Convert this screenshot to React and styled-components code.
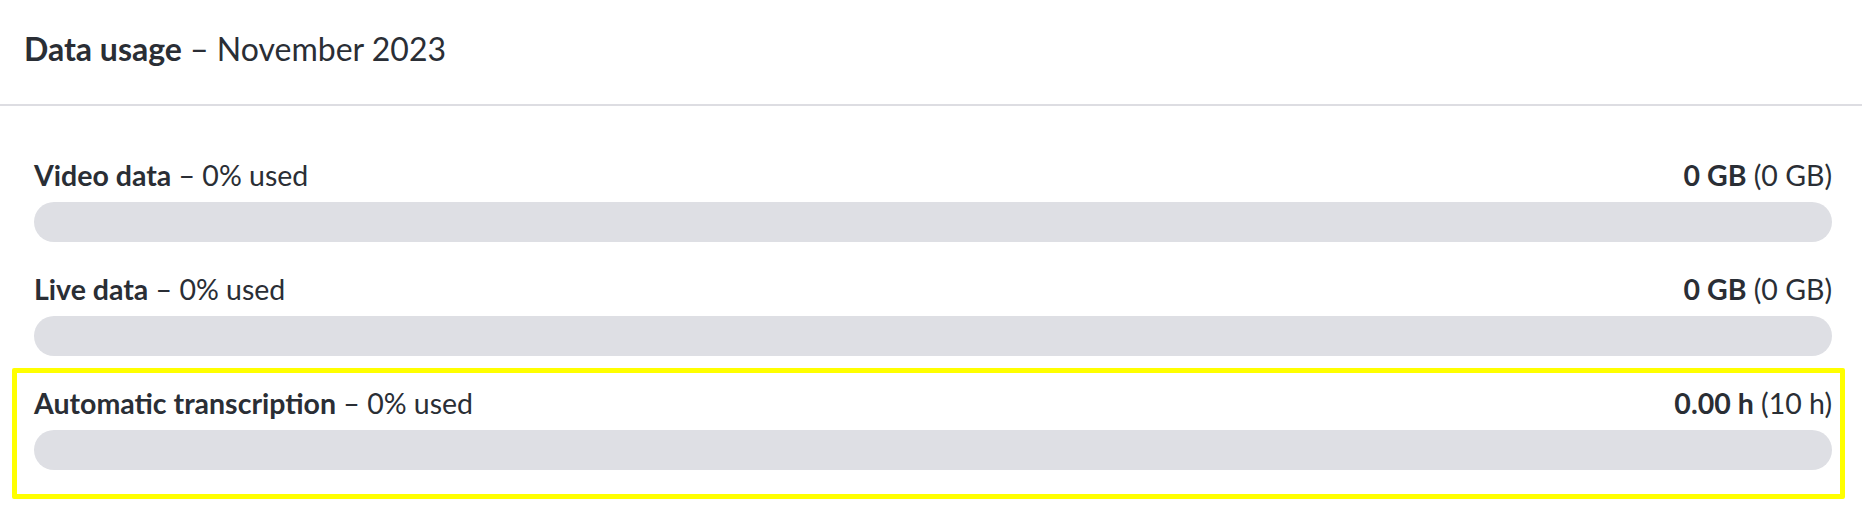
import React from "react";
import styled, { createGlobalStyle } from "styled-components";

const Global = createGlobalStyle`
  html, body { margin: 0; padding: 0; background: #ffffff; }
  body { font-family: Lato, "Noto Sans", sans-serif; color: #2a2e35; overflow: hidden; }
`;

const Panel = styled.section`
  width: 1862px;
  min-height: 512px;
  background: #ffffff;
`;

const Header = styled.header`
  height: 104px;
  display: flex;
  align-items: center;
  padding: 0 24px;
  border-bottom: 2px solid #dddde2;
  box-sizing: content-box;
`;

const Title = styled.h2`
  margin: 0;
  font-size: 32px;
  font-weight: 400;
  line-height: 40px;
  padding-bottom: 6px;
  b { font-weight: 700; }
`;

const List = styled.div`
  display: flex;
  flex-direction: column;
  gap: 28px;
  padding: 50px 30px 0 34px;
`;

const Row = styled.div`
  position: relative;
  display: flex;
  flex-direction: column;
  gap: 8px;
  ${(p) =>
    p.$highlight &&
    `
    &::after {
      content: "";
      position: absolute;
      top: -16px;
      bottom: -29px;
      left: -22px;
      right: -13px;
      border: 5px solid #ffff00;
      border-radius: 2px;
      pointer-events: none;
    }
  `}
`;

const Labels = styled.div`
  display: flex;
  justify-content: space-between;
  align-items: center;
  font-size: 28.5px;
  line-height: 38px;
  b { font-weight: 700; }
`;

const Track = styled.div`
  height: 40px;
  border-radius: 20px;
  background: #dedfe4;
  overflow: hidden;
`;

const Fill = styled.div`
  height: 100%;
  background: #3d6bd6;
  border-radius: 20px;
`;

const rows = [
  { name: "Video data", pct: 0, used: "0 GB", total: "(0 GB)" },
  { name: "Live data", pct: 0, used: "0 GB", total: "(0 GB)" },
  { name: "Automatic transcription", pct: 0, used: "0.00 h", total: "(10 h)", highlight: true },
];

export default function App() {
  return (
    <>
      <Global />
      <Panel>
        <Header>
          <Title>
            <b>Data usage</b> – November 2023
          </Title>
        </Header>
        <List>
          {rows.map((r) => (
            <Row key={r.name} $highlight={r.highlight}>
              <Labels>
                <span>
                  <b>{r.name}</b> – {r.pct}% used
                </span>
                <span>
                  <b>{r.used}</b> {r.total}
                </span>
              </Labels>
              <Track>
                <Fill style={{ width: `${r.pct}%` }} />
              </Track>
            </Row>
          ))}
        </List>
      </Panel>
    </>
  );
}
